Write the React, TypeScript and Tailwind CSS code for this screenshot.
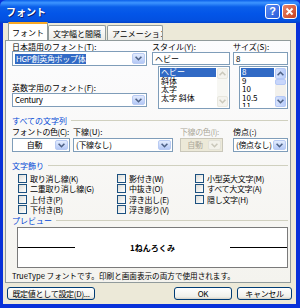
import React from "react";

function Arrow({ disabled }: { disabled?: boolean }) {
  return (
    <div
      className={
        disabled
          ? "flex h-full w-[13px] shrink-0 items-center justify-center rounded-[2px] border border-[#E3E2D9] bg-[#F2F1EA]"
          : "flex h-full w-[13px] shrink-0 items-center justify-center rounded-[2px] border border-[#B9CBF3] bg-[linear-gradient(to_bottom,#E3ECFE,#B4C8F6)]"
      }
    >
      <svg width="7" height="5" viewBox="0 0 7 5">
        <path
          d="M0.6 0.8 L3.5 3.7 L6.4 0.8"
          fill="none"
          stroke={disabled ? "#C9C7BA" : "#4D6185"}
          strokeWidth="1.6"
        />
      </svg>
    </div>
  );
}

function Combo({
  className,
  text,
  center,
  selected,
  disabled,
}: {
  className: string;
  text: string;
  center?: boolean;
  selected?: boolean;
  disabled?: boolean;
}) {
  return (
    <div
      className={
        "flex p-[1px] " +
        (disabled ? "border border-[#C9C7BA] bg-[#ECE9D8] " : "border border-[#7F9DB9] bg-white ") +
        className
      }
    >
      <div className={"flex min-w-0 flex-1 items-center overflow-hidden " + (center ? "justify-center" : "pl-[1px]")}>
        <span
          className={
            (selected ? "bg-[#316AC5] px-[1px] text-white " : "") +
            (disabled ? "text-[#ACA899] " : "text-black ") +
            "leading-[10px] tracking-[-0.3px]"
          }
        >
          {text}
        </span>
      </div>
      <Arrow disabled={disabled} />
    </div>
  );
}

function Check({ label }: { label: string }) {
  return (
    <div className="flex h-[10.5px] items-center gap-[3px]">
      <div className="h-[9px] w-[9px] shrink-0 border border-[#1C5180] bg-[linear-gradient(135deg,#DCDCD7,#FFFFFF)]" />
      <span className="leading-[9px] tracking-[-0.3px]">{label}</span>
    </div>
  );
}

function Group({ label }: { label: string }) {
  return (
    <div className="flex h-[9px] items-center gap-[4px]">
      <span className="leading-[9px] text-[#0046D5]">{label}</span>
      <div className="h-[1px] flex-1 bg-[#D0D0BF]" />
    </div>
  );
}

function ScrollBtn({ up, disabled }: { up?: boolean; disabled?: boolean }) {
  return (
    <div
      className={
        disabled
          ? "flex h-[11px] w-full items-center justify-center rounded-[2px] border border-[#E8E7DE] bg-[#F4F3EE]"
          : "flex h-[11px] w-full items-center justify-center rounded-[2px] border border-[#B4C8F6] bg-[linear-gradient(to_right,#D6E2FC,#B9CDFA)]"
      }
    >
      <svg width="7" height="5" viewBox="0 0 7 5">
        <path
          d={up ? "M0.6 4.2 L3.5 1.3 L6.4 4.2" : "M0.6 0.8 L3.5 3.7 L6.4 0.8"}
          fill="none"
          stroke={disabled ? "#CAC8BB" : "#4D6185"}
          strokeWidth="1.6"
        />
      </svg>
    </div>
  );
}

const BTN =
  "flex items-center justify-center rounded-[3px] border border-[#003C74] bg-[linear-gradient(to_bottom,#FFFFFF,#F0F0EA_80%,#D6D0C5)] leading-[9px] tracking-[-0.3px]";

export default function App() {
  return (
    <div className="h-[308px] w-[300px] overflow-hidden whitespace-nowrap bg-[#0831D9] font-['Noto_Sans_CJK_JP',sans-serif] text-[8px] text-black">
      {/* Title bar */}
      <div className="flex h-[23px] items-center rounded-t-[6px] bg-[linear-gradient(to_bottom,#0A5FEA,#3D95FF_12%,#0A5FEA_30%,#0355E8_60%,#0350E0_90%,#0241C8)] pl-[6px] pr-[3px]">
        <span className="flex-1 text-[10px] font-bold leading-[10px] text-white [text-shadow:1px_1px_0_#0A1E6E]">
          フォント
        </span>
        <div className="flex gap-[2px]">
          <div className="flex h-[15px] w-[15px] items-center justify-center rounded-[3px] border border-white bg-[linear-gradient(135deg,#5A8CF5,#2A5BD8)] font-['Liberation_Sans',sans-serif] text-[11px] font-bold leading-[11px] text-white">
            ?
          </div>
          <div className="flex h-[15px] w-[15px] items-center justify-center rounded-[3px] border border-white bg-[linear-gradient(135deg,#E9866A,#C8401E)]">
            <svg width="9" height="9" viewBox="0 0 9 9">
              <path d="M1.5 1.5 L7.5 7.5 M7.5 1.5 L1.5 7.5" stroke="white" strokeWidth="1.8" />
            </svg>
          </div>
        </div>
      </div>

      {/* Body */}
      <div className="ml-[3px] mr-[4px] flex h-[281px] flex-col bg-[#ECE9D8]">
        {/* Tabs */}
        <div className="flex h-[17px] items-end pl-[5px]">
          <div className="flex h-[18px] w-[40px] flex-col border-x border-[#919B9C] bg-white">
            <div className="h-[2px] bg-[#F7A826]" />
            <div className="flex flex-1 items-center justify-center leading-[9px]">フォント</div>
          </div>
          <div className="flex h-[15px] w-[58px] items-center justify-center rounded-t-[2px] border border-b-0 border-[#919B9C] bg-[linear-gradient(to_bottom,#FFFFFF,#ECEBE6)] leading-[9px]">
            文字幅と間隔
          </div>
          <div className="ml-[1px] flex h-[15px] w-[56px] items-center justify-start overflow-hidden rounded-t-[2px] border border-b-0 border-[#919B9C] bg-[linear-gradient(to_bottom,#FFFFFF,#ECEBE6)] pl-[4px] leading-[9px]">
            アニメーション
          </div>
        </div>

        {/* Panel */}
        <div className="ml-[2px] mr-[5px] flex h-[243px] flex-col border border-[#919B9C] bg-[linear-gradient(to_bottom,#FCFCFE,#F4F3EE)] pl-[6px] pr-[2px] pt-[1px]">
          {/* top section */}
          <div className="flex h-[68px]">
            <div className="flex w-[135px] flex-col">
              <div className="h-[9px] leading-[9px]">日本語用のフォント(T):</div>
              <Combo className="h-[15px] w-[135px]" text="HGP創英角ポップ体" selected />
              <div className="mt-[17px] h-[10px] leading-[10px]">英数字用のフォント(F):</div>
              <Combo className="h-[14px] w-[135px]" text="Century" />
            </div>
            <div className="ml-[5px] flex w-[78px] flex-col">
              <div className="h-[10px] leading-[9px]">スタイル(Y):</div>
              <div className="flex h-[13px] items-center border border-[#7F9DB9] bg-white pl-[2px] leading-[9px]">
                ヘビー
              </div>
              <div className="ml-[6px] mt-[1px] flex h-[43px] border border-[#7F9DB9] bg-white p-[1px]">
                <div className="flex flex-1 flex-col overflow-hidden pr-[1px]">
                  <div className="h-[8.6px] shrink-0 bg-[#316AC5] pl-[1px] leading-[8.6px] text-white">ヘビー</div>
                  <div className="h-[8.6px] shrink-0 pl-[1px] leading-[8.6px]">斜体</div>
                  <div className="h-[8.6px] shrink-0 pl-[1px] leading-[8.6px]">太字</div>
                  <div className="h-[8.6px] shrink-0 pl-[1px] leading-[8.6px]">太字 斜体</div>
                </div>
                <div className="flex w-[11px] flex-col justify-between bg-[#F7F7F3]">
                  <ScrollBtn up disabled />
                  <ScrollBtn disabled />
                </div>
              </div>
            </div>
            <div className="ml-[3px] flex w-[55px] flex-col">
              <div className="h-[10px] leading-[9px]">サイズ(S):</div>
              <div className="flex h-[13px] items-center border border-[#7F9DB9] bg-white pl-[2px] leading-[9px]">
                8
              </div>
              <div className="ml-[6px] mt-[1px] flex h-[43px] border border-[#7F9DB9] bg-white p-[1px]">
                <div className="flex flex-1 flex-col overflow-hidden pr-[1px]">
                  <div className="h-[8.6px] shrink-0 bg-[#316AC5] pl-[1px] leading-[8.6px] text-white">8</div>
                  <div className="h-[8.6px] shrink-0 pl-[1px] leading-[8.6px]">9</div>
                  <div className="h-[8.6px] shrink-0 pl-[1px] leading-[8.6px]">10</div>
                  <div className="h-[8.6px] shrink-0 pl-[1px] leading-[8.6px]">10.5</div>
                  <div className="h-[8.6px] shrink-0 pl-[1px] leading-[8.6px]">11</div>
                </div>
                <div className="flex w-[11px] flex-col bg-[#F3F1EC]">
                  <ScrollBtn up />
                  <div className="h-[6px] w-full rounded-[2px] border border-[#B4C8F6] bg-[#C8D6FB]" />
                  <div className="flex-1" />
                  <ScrollBtn />
                </div>
              </div>
            </div>
          </div>

          {/* すべての文字列 */}
          <div className="mt-[6px]">
            <Group label="すべての文字列" />
          </div>
          <div className="mt-[2px] flex h-[25px]">
            <div className="flex w-[58px] flex-col">
              <div className="h-[11px] leading-[9px] tracking-[-0.4px]">フォントの色(C):</div>
              <Combo className="h-[14px] w-[58px]" text="自動" center />
            </div>
            <div className="ml-[3px] flex w-[100px] flex-col">
              <div className="h-[11px] leading-[9px]">下線(U):</div>
              <Combo className="h-[14px] w-[100px]" text="(下線なし)" />
            </div>
            <div className="ml-[7px] flex w-[43px] flex-col">
              <div className="h-[11px] leading-[9px] tracking-[-0.4px] text-[#ACA899]">下線の色(I):</div>
              <Combo className="h-[14px] w-[43px]" text="自動" center disabled />
            </div>
            <div className="ml-[10px] flex w-[55px] flex-col">
              <div className="h-[11px] leading-[9px]">傍点(:)</div>
              <Combo className="h-[14px] w-[55px]" text="(傍点なし)" />
            </div>
          </div>

          {/* 文字飾り */}
          <div className="mt-[9px]">
            <Group label="文字飾り" />
          </div>
          <div className="mt-[3px] flex pl-[6px]">
            <div className="flex w-[99px] flex-col">
              <Check label="取り消し線(K)" />
              <Check label="二重取り消し線(G)" />
              <Check label="上付き(P)" />
              <Check label="下付き(B)" />
            </div>
            <div className="flex w-[78px] flex-col">
              <Check label="影付き(W)" />
              <Check label="中抜き(O)" />
              <Check label="浮き出し(E)" />
              <Check label="浮き彫り(V)" />
            </div>
            <div className="flex flex-col">
              <Check label="小型英大文字(M)" />
              <Check label="すべて大文字(A)" />
              <Check label="隠し文字(H)" />
            </div>
          </div>

          {/* プレビュー */}
          <div className="mt-[1px]">
            <Group label="プレビュー" />
          </div>
          <div className="ml-[5px] mt-[2px] flex h-[41px] items-center border border-[#7A7A7A] bg-white">
            <div className="h-[1px] w-[57px] bg-black" />
            <div className="flex flex-1 justify-center pb-[1px] text-[8px] font-bold leading-[9px]">1ねんろくみ</div>
            <div className="h-[1px] w-[57px] bg-black" />
          </div>
          <div className="mt-[3px] h-[9px] text-[7.6px] leading-[9px]">
            TrueType フォントです。印刷と画面表示の両方で使用されます。
          </div>
        </div>

        {/* Buttons */}
        <div className="mt-[4px] flex h-[13px] pl-[4px] pr-[4px]">
          <div className={BTN + " w-[88px]"}>既定値として設定(D)...</div>
          <div className="flex-1" />
          <div className={BTN + " w-[58px]"}>OK</div>
          <div className={BTN + " ml-[5px] w-[55px]"}>キャンセル</div>
        </div>
      </div>
    </div>
  );
}
